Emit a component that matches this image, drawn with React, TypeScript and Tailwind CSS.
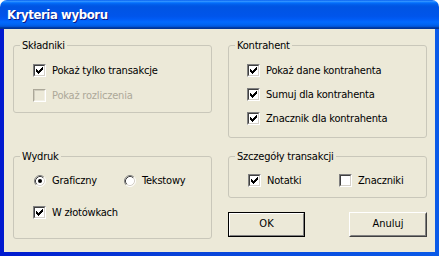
import React from "react";

const FONT = '"DejaVu Sans Condensed", "Liberation Sans", sans-serif';

function CheckMark() {
  return (
    <svg width="7" height="7" viewBox="0 0 7 7" shapeRendering="crispEdges">
      <path
        fill="#000"
        d="M6 0h1v1h-1z M5 1h2v1h-2z M0 2h1v1h-1z M4 2h3v1h-3z M0 3h2v1h-2z M3 3h3v1h-3z M0 4h5v1h-5z M1 5h3v1h-3z M2 6h1v1h-1z"
      />
    </svg>
  );
}

function Check({ checked, disabled }: { checked?: boolean; disabled?: boolean }) {
  return (
    <span
      className={
        "w-[13px] h-[13px] shrink-0 flex border " +
        (disabled
          ? "border-t-[#ACA899] border-l-[#ACA899] border-b-white border-r-white"
          : "border-t-[#808080] border-l-[#808080] border-b-white border-r-white")
      }
    >
      <span
        className={
          "flex-1 flex items-center justify-center border " +
          (disabled
            ? "bg-[#ECE9D8] border-t-[#D0CDBE] border-l-[#D0CDBE] border-b-[#F2F0E6] border-r-[#F2F0E6]"
            : "bg-white border-t-[#404040] border-l-[#404040] border-b-[#D4D0C8] border-r-[#D4D0C8]")
        }
      >
        {checked && <CheckMark />}
      </span>
    </span>
  );
}

function Radio({ checked }: { checked?: boolean }) {
  return (
    <svg width="12" height="12" viewBox="0 0 12 12" className="shrink-0">
      <circle cx="6" cy="6" r="5" fill="#fff" />
      <path d="M9.89 2.11 A5.5 5.5 0 0 0 2.11 9.89" stroke="#808080" strokeWidth="1" fill="none" />
      <path d="M2.11 9.89 A5.5 5.5 0 0 0 9.89 2.11" stroke="#fff" strokeWidth="1" fill="none" />
      <path d="M9.18 2.82 A4.5 4.5 0 0 0 2.82 9.18" stroke="#404040" strokeWidth="1" fill="none" />
      <path d="M2.82 9.18 A4.5 4.5 0 0 0 9.18 2.82" stroke="#D4D0C8" strokeWidth="1" fill="none" />
      {checked && <circle cx="6" cy="6" r="2" fill="#000" />}
    </svg>
  );
}

function CheckRow({
  label,
  checked,
  disabled,
  className = "",
}: {
  label: string;
  checked?: boolean;
  disabled?: boolean;
  className?: string;
}) {
  return (
    <div className={"flex items-center gap-[6px] h-[13px] " + className}>
      <Check checked={checked} disabled={disabled} />
      <span
        className={
          "text-[11px] leading-[13px] tracking-[-0.2px] whitespace-nowrap " +
          (disabled ? "text-[#ACA899]" : "text-black")
        }
      >
        {label}
      </span>
    </div>
  );
}

function RadioRow({ label, checked, className = "" }: { label: string; checked?: boolean; className?: string }) {
  return (
    <div className={"flex items-center gap-[6px] h-[13px] " + className}>
      <Radio checked={checked} />
      <span className="text-[11px] leading-[13px] tracking-[-0.2px] whitespace-nowrap text-black">{label}</span>
    </div>
  );
}

function Group({
  title,
  className = "",
  children,
}: {
  title: string;
  className?: string;
  children: React.ReactNode;
}) {
  return (
    <fieldset className={"border border-[#C9C7BA] rounded-[3px] " + className}>
      <legend className="ml-[6px] px-[2px] text-[11px] leading-[13px] tracking-[-0.2px] text-black">{title}</legend>
      {children}
    </fieldset>
  );
}

export default function App() {
  return (
    <div className="w-[439px] h-[256px] flex flex-col bg-white" style={{ fontFamily: FONT }}>
      <div className="h-[29px] shrink-0 rounded-t-[7px] flex items-center pl-[7px] bg-[linear-gradient(to_bottom,#0058EE_0%,#3593FF_4%,#288EFF_6%,#127DFF_8%,#036FFC_10%,#0262EE_14%,#0057E5_20%,#0054E3_24%,#0055EB_56%,#005BF5_66%,#026AFE_76%,#0062EF_86%,#0052D6_92%,#0040AB_94%,#003092_100%)]">
        <span className="text-white font-bold text-[13px] leading-[16px] [text-shadow:1px_1px_#0A1883] tracking-[-0.4px]">
          Kryteria wyboru
        </span>
      </div>
      <div className="flex-1 flex px-[4px] pb-[4px] bg-[linear-gradient(to_right,#0019CF,#0842D8_40%,#0A5AE8_100%)]">
        <div className="flex-1 bg-[#ECE9D8] flex pl-[9px] pr-[8px] pt-[10px] gap-[16px]">
          <div className="w-[199px] flex flex-col">
            <Group title="Składniki" className="h-[74px]">
              <div className="pl-[19px] pt-[12px] flex flex-col gap-[12px]">
                <CheckRow label="Pokaż tylko transakcje" checked />
                <CheckRow label="Pokaż rozliczenia" disabled />
              </div>
            </Group>
            <Group title="Wydruk" className="h-[89px] mt-[37px]">
              <div className="pl-[20px] pt-[11px] flex flex-col gap-[19px]">
                <div className="flex">
                  <RadioRow label="Graficzny" checked className="w-[90px]" />
                  <RadioRow label="Tekstowy" />
                </div>
                <div className="-ml-[1px]">
                  <CheckRow label="W złotówkach" checked />
                </div>
              </div>
            </Group>
          </div>
          <div className="w-[199px] flex flex-col">
            <Group title="Kontrahent" className="h-[99px]">
              <div className="pl-[18px] pt-[12px] flex flex-col gap-[11px]">
                <CheckRow label="Pokaż dane kontrahenta" checked />
                <CheckRow label="Sumuj dla kontrahenta" checked />
                <CheckRow label="Znacznik dla kontrahenta" checked />
              </div>
            </Group>
            <Group title="Szczegóły transakcji" className="h-[48px] mt-[12px]">
              <div className="pl-[19px] pt-[11px] flex">
                <CheckRow label="Notatki" checked className="w-[91px]" />
                <CheckRow label="Znaczniki" />
              </div>
            </Group>
            <div className="mt-[14px] flex justify-between">
              <button className="w-[77px] h-[25px] border border-black flex p-0 bg-[#ECE9D8]">
                <span className="flex-1 flex items-center justify-center border border-t-white border-l-white border-b-[#808080] border-r-[#808080] text-[11px] text-black">
                  OK
                </span>
              </button>
              <button className="w-[78px] h-[25px] border border-t-white border-l-white border-b-[#404040] border-r-[#404040] flex p-0 bg-[#ECE9D8]">
                <span className="flex-1 flex items-center justify-center border border-t-[#ECE9D8] border-l-[#ECE9D8] border-b-[#808080] border-r-[#808080] text-[11px] text-black">
                  Anuluj
                </span>
              </button>
            </div>
          </div>
        </div>
      </div>
    </div>
  );
}
